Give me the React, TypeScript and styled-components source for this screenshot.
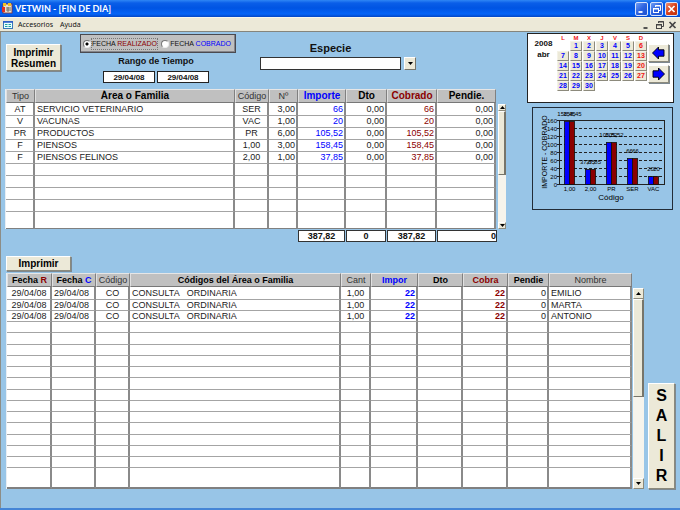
import React from 'react';
import styled, { createGlobalStyle } from 'styled-components';

const BLUE = '#0000ff';
const RED = '#8b0000';
const CREAM = '#ece9d8';

const GlobalStyle = createGlobalStyle`
  * { box-sizing: border-box; }
  body { margin: 0; background: #98c5e7; }
  button, input, select { font-family: inherit; margin: 0; padding: 0; }
`;

const Window = styled.div`
  display: flex;
  flex-direction: column;
  min-height: 100vh;
  font-family: 'Liberation Sans', Arial, sans-serif;
  font-size: 9px;
  color: #111;
  background: linear-gradient(90deg, #8d8d86 0 1px, #98c5e7 1px);
  border-bottom: 2px solid #4585d6;
`;

const TitleBar = styled.header`
  display: flex;
  align-items: center;
  gap: 2px;
  height: 17px;
  padding: 0 2px;
  background: linear-gradient(#2f86f5 0, #0a5ee8 3px, #0054e3 8px, #0464f8 14px, #0346c4 17px);
`;

const Title = styled.h1`
  flex: 1;
  margin: 0;
  font: bold 9px/16px Lato, sans-serif;
  color: #fff;
`;

const Controls = styled.div`
  display: flex;
  gap: 2px;
`;

const CaptionButton = styled.button<{ $close?: boolean }>`
  display: flex;
  width: 13px;
  height: 14px;
  border: 1px solid #d5e2fb;
  border-radius: 2px;
  background: ${p => (p.$close ? 'linear-gradient(135deg, #f09070, #d8401c 50%, #c03008)' : 'linear-gradient(135deg, #6f9cf5, #2c62e0 50%, #1c50d0)')};
`;

const MenuBar = styled.nav`
  display: flex;
  align-items: center;
  height: 15px;
  padding: 0 2px 0 3px;
  background: ${CREAM};
  border-top: 1px solid #f8f6ec;
  border-bottom: 1px solid #85857c;
  font: 7px/13px 'Noto Sans', sans-serif;
`;

const MenuItem = styled.button`
  margin-right: 7px;
  border: 0;
  background: none;
  font: inherit;
  color: #111;
`;

const MenuIcon = styled.svg`
  margin-right: 5px;
`;

const DocControls = styled(Controls)`
  margin-left: auto;
`;

const DocButton = styled.button`
  display: flex;
  width: 11px;
  height: 12px;
  border: 0;
  background: none;
`;

const Upper = styled.main`
  display: grid;
  grid-template-columns: minmax(0, 1fr) 147px;
  gap: 21px;
  padding: 1px 6px 0 5px;
`;

const Filters = styled.div`
  display: flex;
  height: 56px;
  padding-left: 1px;
`;

const PushButton = styled.button`
  border: 1px solid;
  border-color: #fff #8c8a7c #8c8a7c #fff;
  background: ${CREAM};
  box-shadow: 1px 1px 0 #7d8890;
  color: #000;
  font-size: 10px;
  font-weight: bold;
  line-height: 11px;
`;

const SummaryButton = styled(PushButton)`
  width: 55px;
  height: 27px;
  margin-top: 11px;
`;

const DateFilter = styled.div`
  display: flex;
  flex-direction: column;
  align-items: center;
  width: 156px;
  margin: 1px 24px 0 19px;
`;

const RadioBox = styled.div`
  display: flex;
  align-items: center;
  justify-content: space-between;
  width: 156px;
  height: 19px;
  padding: 0 4px 0 2px;
  border: 1px solid #4a4a50;
  box-shadow: inset -1px -1px 0 #85858a;
  background: #c0c0c0;
  font-size: 7px;
`;

const RadioLabel = styled.label`
  display: flex;
  align-items: center;
  gap: 1px;
`;

const RadioText = styled.span<{ $focus?: boolean }>`
  line-height: 10px;
  outline: ${p => (p.$focus ? '1px dotted #777' : 'none')};
`;

const Radio = styled.input`
  appearance: none;
  width: 8px;
  height: 8px;
  border: 1px solid;
  border-color: #777 #eee #eee #777;
  border-radius: 50%;
  background: #fff;
  &:checked { background: radial-gradient(#000 0 1px, #fff 2px); }
`;

const Tint = styled.span<{ $color: string }>`
  color: ${p => p.$color};
`;

const RangeLabel = styled.div`
  margin: 2px 0 4px;
  padding-right: 4px;
  font-size: 9px;
  font-weight: bold;
  line-height: 12px;
`;

const Range = styled.div`
  display: flex;
  gap: 2px;
  padding-right: 4px;
`;

const DateInput = styled.input`
  width: 52px;
  height: 12px;
  border: 1px solid #222;
  background: #fff;
  font-size: 8px;
  font-weight: bold;
  text-align: center;
  color: #111;
`;

const Species = styled.div`
  display: grid;
  grid-template-columns: 141px 12px;
  grid-template-rows: 14px 13px;
  column-gap: 3px;
  row-gap: 2px;
  margin-top: 8px;
  align-content: start;
`;

const SpeciesLabel = styled.label`
  font-size: 11px;
  font-weight: bold;
  line-height: 14px;
  text-align: center;
`;

const SpeciesField = styled.span`
  grid-area: 2 / 1;
  border: 1px solid #333;
  background: #fff;
`;

const SpeciesArrow = styled.span`
  grid-area: 2 / 2;
  display: flex;
  align-items: center;
  justify-content: center;
  border: 1px solid;
  border-color: #fff #77756a #77756a #fff;
  background: ${CREAM};
`;

const SpeciesSelect = styled.select`
  grid-area: 2 / 1 / 3 / 3;
  z-index: 1;
  appearance: none;
  border: 0;
  background: none;
  padding: 0 16px 0 4px;
  font-size: 9px;
`;

const GridRow = styled.div`
  display: flex;
`;

const Table = styled.table`
  flex: 1;
  width: 0;
  table-layout: fixed;
  border-collapse: separate;
  border-spacing: 0;
  border-left: 1px solid #e8eef4;
`;

const HeadCell = styled.th<{ $plain?: boolean; $color?: string }>`
  height: 14px;
  padding: 0;
  overflow: hidden;
  border: 1px solid;
  border-color: #e6e6e6 #808080 #777 #e0e0e0;
  background: #c0c0c0;
  color: ${p => p.$color || (p.$plain ? '#333' : '#000')};
  font-size: ${p => (p.$plain ? '9px' : '10px')};
  font-weight: ${p => (p.$plain ? 'normal' : 'bold')};
  line-height: 12px;
  white-space: nowrap;
`;

const LowerHeadCell = styled(HeadCell)`
  font-size: 9px;
`;

type Align = 'left' | 'center' | 'right';

const Cell = styled.td<{ $align?: Align; $color?: string; $bold?: boolean }>`
  height: 12px;
  padding: 0 1px 0 2px;
  overflow: hidden;
  border-right: 2px solid #8a8a8a;
  border-bottom: 1px solid #a4a4a4;
  background: #fff;
  color: ${p => p.$color || '#222'};
  font-weight: ${p => (p.$bold ? 'bold' : 'normal')};
  line-height: 11px;
  text-align: ${p => p.$align || 'left'};
  white-space: pre;
`;

const UpperBody = styled.tbody`
  tr:first-child td { height: 13px; padding-top: 1px; }
  tr:last-child td { height: 17px; border-bottom-color: #808080; }
`;

const LowerBody = styled.tbody`
  td { height: 11px; line-height: 10px; }
  tr:nth-child(4n + 1) td { height: 12px; line-height: 11px; }
  tr:first-child td { height: 13px; padding-top: 1px; }
  tr:last-child td { height: 21px; border-bottom: 2px solid #808080; }
`;

const ScrollBar = styled.div<{ $wide?: boolean }>`
  display: flex;
  flex-direction: column;
  width: ${p => (p.$wide ? '11px' : '8px')};
  margin: 15px 0 0 ${p => (p.$wide ? '1px' : '2px')};
  background: #f6f4ec;
`;

const ScrollArrow = styled.button<{ $tall?: boolean }>`
  display: flex;
  align-items: center;
  justify-content: center;
  height: ${p => (p.$tall ? '11px' : '7px')};
  border: 1px solid;
  border-color: #fff #8c8a7c #8c8a7c #fff;
  background: ${CREAM};
`;

const Thumb = styled.div<{ $size: string }>`
  flex: 0 0 ${p => p.$size};
  margin-bottom: auto;
  border: 1px solid;
  border-color: #fff #77756a #77756a #fff;
  border-right-width: 2px;
  background: ${CREAM};
`;

const Totals = styled.div`
  display: grid;
  grid-template-columns: 47px 40px 49px 60px;
  gap: 1px;
  justify-content: end;
  margin: 1px 9px 0 0;
`;

const Total = styled.output<{ $end?: boolean }>`
  height: 12px;
  border: 1px solid #333;
  background: #fff;
  font-size: 9px;
  font-weight: bold;
  line-height: 10px;
  text-align: ${p => (p.$end ? 'right' : 'center')};
`;

const Side = styled.aside`
  display: flex;
  flex-direction: column;
  gap: 4px;
`;

const Calendar = styled.section`
  display: flex;
  height: 70px;
  border: 1px solid #222;
  background: #fff;
`;

const Month = styled.div`
  width: 29px;
  padding: 4px 0 0 2px;
  font-size: 8px;
  font-weight: bold;
  line-height: 11px;
  text-align: center;
`;

const Days = styled.div`
  display: grid;
  grid-template-columns: repeat(7, 12px);
  grid-template-rows: 7px;
  grid-auto-rows: 10px;
  column-gap: 1px;
  align-content: start;
`;

const WeekDay = styled.span`
  color: #f01818;
  font-size: 6px;
  font-weight: bold;
  line-height: 8px;
  text-align: center;
`;

const Day = styled.button<{ $sunday?: boolean; $first?: boolean }>`
  grid-column-start: ${p => (p.$first ? 2 : 'auto')};
  border: 1px solid;
  border-color: #f4f2e6 #8c8a7c #8c8a7c #f4f2e6;
  background: ${CREAM};
  color: ${p => (p.$sunday ? '#f01010' : BLUE)};
  font-size: 7px;
  font-weight: bold;
  line-height: 8px;
`;

const Pager = styled.div`
  display: flex;
  flex-direction: column;
  gap: 3px;
  margin: 10px 0 0 1px;
`;

const PagerButton = styled(PushButton)`
  display: flex;
  align-items: center;
  justify-content: center;
  width: 21px;
  height: 18px;
`;

const Chart = styled.svg`
  display: block;
  margin-left: 5px;
  font-family: 'Liberation Sans', Arial, sans-serif;
`;

const Lower = styled.section`
  padding: 14px 5px 0 6px;
`;

const PrintButton = styled(PushButton)`
  display: block;
  width: 65px;
  height: 15px;
  margin-bottom: 2px;
`;

const ExitButton = styled(PushButton)`
  align-self: flex-end;
  display: flex;
  flex-direction: column;
  align-items: center;
  justify-content: center;
  width: 27px;
  height: 106px;
  margin-left: 4px;
  font-size: 16px;
  line-height: 20px;
`;

const Arrow = ({ down }: { down?: boolean }) => (
  <svg width="5" height="3" viewBox="0 0 5 3" aria-hidden="true">
    <path d={down ? 'M0 0H5L2.5 3Z' : 'M0 3H5L2.5 0Z'} fill="#000" />
  </svg>
);

const MonthArrow = ({ back }: { back?: boolean }) => (
  <svg width="15" height="14" viewBox="0 0 15 14" aria-hidden="true">
    <path
      d={back ? 'M1.5 7L7.5 1V3.8H13V10.2H7.5V13Z' : 'M13.5 7L7.5 1V3.8H2V10.2H7.5V13Z'}
      fill="#0000ff"
      stroke="#000"
      strokeWidth="0.9"
    />
  </svg>
);

const Glyph = ({ kind, color }: { kind: 'min' | 'restore' | 'close'; color: string }) => (
  <svg width="11" height="12" viewBox="0 0 11 12" fill="none" stroke={color} aria-hidden="true">
    {kind === 'min' && <path d="M2.5 9H6.5" strokeWidth="1.8" />}
    {kind === 'restore' && (
      <g strokeWidth="1">
        <path d="M4.5 4V2.5H9.5V7.5H8" />
        <path d="M4 3H10" />
        <rect x="2.5" y="5.5" width="5" height="4" />
        <path d="M2 6H8" />
      </g>
    )}
    {kind === 'close' && <path d="M2.5 3L8.5 9M8.5 3L2.5 9" strokeWidth="1.7" />}
  </svg>
);

const kinds = ['min', 'restore', 'close'] as const;
const kindNames = { min: 'Minimizar', restore: 'Restaurar', close: 'Cerrar' };

const areas = [
  ['AT', 'SERVICIO VETERINARIO', 'SER', '3,00', '66', '0,00', '66', '0,00'],
  ['V', 'VACUNAS', 'VAC', '1,00', '20', '0,00', '20', '0,00'],
  ['PR', 'PRODUCTOS', 'PR', '6,00', '105,52', '0,00', '105,52', '0,00'],
  ['F', 'PIENSOS', '1,00', '3,00', '158,45', '0,00', '158,45', '0,00'],
  ['F', 'PIENSOS FELINOS', '2,00', '1,00', '37,85', '0,00', '37,85', '0,00'],
];

const areaAlign: Align[] = ['center', 'left', 'center', 'right', 'right', 'right', 'right', 'right'];
const areaColor: Record<number, string> = { 4: BLUE, 6: RED };

const visit = (name: string) => ['29/04/08', '29/04/08', 'CO', 'CONSULTA   ORDINARIA', '1,00', '22', '', '22', '0', name];
const visits = ['EMILIO', 'MARTA', 'ANTONIO'].map(visit);
const visitAlign: Align[] = ['center', 'left', 'center', 'left', 'center', 'right', 'right', 'right', 'right', 'left'];
const visitColor: Record<number, string> = { 5: BLUE, 7: RED };

const pad = (rows: string[][], count: number, columns: number) => [
  ...rows,
  ...Array.from({ length: count - rows.length }, () => Array(columns).fill('')),
];

const bars = [
  { code: '1,00', value: 158.45, label: '158,45' },
  { code: '2,00', value: 37.85, label: '37,85' },
  { code: 'PR', value: 105.52, label: '105,52' },
  { code: 'SER', value: 66, label: '66' },
  { code: 'VAC', value: 20, label: '20' },
];

const ticks = [0, 20, 40, 60, 80, 100, 120, 140, 160];

const AmountChart = () => (
  <Chart width="141" height="103" viewBox="0 0 141 103" role="img" aria-label="Importe y cobrado por código">
    <rect x="0.5" y="0.5" width="140" height="102" fill="none" stroke="#222c38" />
    {ticks.map(t => (
      <g key={t}>
        <path d={`M27 ${77.5 - t * 0.4}H132`} stroke="#222" strokeDasharray={t % 160 ? '3 2' : undefined} />
        <path d={`M25 ${77.5 - t * 0.4}H28`} stroke="#222" />
        <text x="25" y={79.5 - t * 0.4} fontSize="6" textAnchor="end">{t}</text>
      </g>
    ))}
    <path d="M27.5 13V78M132.5 13V78" stroke="#222" />
    {bars.map((b, i) => {
      const x = 32.5 + i * 21;
      const h = Math.round(b.value * 0.4);
      return (
        <g key={b.code}>
          <rect x={x} y={77.5 - h} width="5" height={h} fill="#0000ff" stroke="#111" strokeWidth="0.8" />
          <rect x={x + 5} y={77.5 - h} width="5" height={h} fill="#8b0000" stroke="#111" strokeWidth="0.8" />
          <text x={x + 2} y={72 - h} fontSize="6" textAnchor="middle">{b.label}</text>
          <text x={x + 8} y={72 - h} fontSize="6" textAnchor="middle">{b.label}</text>
          <text x={x + 5} y="84" fontSize="6" textAnchor="middle">{b.code}</text>
        </g>
      );
    })}
    <text x="79" y="93" fontSize="8" textAnchor="middle">Código</text>
    <text transform="translate(15 45) rotate(-90)" fontSize="7" textAnchor="middle">IMPORTE - COBRADO</text>
  </Chart>
);

export default function App() {
  return (
    <Window>
      <GlobalStyle />
      <TitleBar>
        <svg width="11" height="13" viewBox="0 0 11 13" aria-hidden="true">
          <rect x="1" y="2" width="9" height="9" fill="#e8e0d0" stroke="#8a3028" strokeWidth="0.8" />
          <path d="M1 1H4V4H1ZM6 1H9V4H6Z" fill="#f2c020" />
          <path d="M0 5H3V10H0Z" fill="#e03020" />
          <path d="M4 6H9M4 8H9M6 5V10" stroke="#555" strokeWidth="0.8" />
        </svg>
        <Title>VETWIN - [FIN DE DIA]</Title>
        <Controls>
          {kinds.map(k => (
            <CaptionButton key={k} $close={k === 'close'} aria-label={kindNames[k]}>
              <Glyph kind={k} color="#fff" />
            </CaptionButton>
          ))}
        </Controls>
      </TitleBar>
      <MenuBar>
        <MenuIcon width="10" height="8" viewBox="0 0 10 8" aria-hidden="true">
          <rect x="0.5" y="0.5" width="9" height="7" fill="#e8ffff" stroke="#3878b8" />
          <path d="M0 1H10" stroke="#2858c8" strokeWidth="1.5" />
          <path d="M2 3.5H4.5M2 5.5H4.5M5.5 3.5H8M5.5 5.5H8" stroke="#20a0a0" />
        </MenuIcon>
        <MenuItem>Accesorios</MenuItem>
        <MenuItem>Ayuda</MenuItem>
        <DocControls>
          {kinds.map(k => (
            <DocButton key={k} aria-label={`${kindNames[k]} documento`}>
              <Glyph kind={k} color="#444" />
            </DocButton>
          ))}
        </DocControls>
      </MenuBar>

      <Upper>
        <div>
          <Filters>
            <SummaryButton>Imprimir Resumen</SummaryButton>
            <DateFilter>
              <RadioBox role="radiogroup" aria-label="Tipo de fecha">
                <RadioLabel>
                  <Radio type="radio" name="fecha" defaultChecked />
                  <RadioText $focus>FECHA <Tint $color={RED}>REALIZADO</Tint></RadioText>
                </RadioLabel>
                <RadioLabel>
                  <Radio type="radio" name="fecha" />
                  <RadioText>FECHA <Tint $color={BLUE}>COBRADO</Tint></RadioText>
                </RadioLabel>
              </RadioBox>
              <RangeLabel>Rango de Tiempo</RangeLabel>
              <Range>
                <DateInput aria-label="Desde" defaultValue="29/04/08" />
                <DateInput aria-label="Hasta" defaultValue="29/04/08" />
              </Range>
            </DateFilter>
            <Species>
              <SpeciesLabel htmlFor="especie">Especie</SpeciesLabel>
              <SpeciesField aria-hidden="true" />
              <SpeciesArrow aria-hidden="true"><Arrow down /></SpeciesArrow>
              <SpeciesSelect id="especie"><option value="" /></SpeciesSelect>
            </Species>
          </Filters>
          <GridRow>
            <Table>
              <colgroup>
                <col width="29" /><col /><col width="34" /><col width="29" />
                <col width="48" /><col width="41" /><col width="50" /><col width="59" />
              </colgroup>
              <thead>
                <tr>
                  <HeadCell $plain>Tipo</HeadCell>
                  <HeadCell>Área o Familia</HeadCell>
                  <HeadCell $plain>Código</HeadCell>
                  <HeadCell $plain>Nº</HeadCell>
                  <HeadCell $color={BLUE}>Importe</HeadCell>
                  <HeadCell>Dto</HeadCell>
                  <HeadCell $color={RED}>Cobrado</HeadCell>
                  <HeadCell>Pendie.</HeadCell>
                </tr>
              </thead>
              <UpperBody>
                {pad(areas, 10, 8).map((row, r) => (
                  <tr key={r}>
                    {row.map((text, c) => (
                      <Cell key={c} $align={areaAlign[c]} $color={areaColor[c]}>{text}</Cell>
                    ))}
                  </tr>
                ))}
              </UpperBody>
            </Table>
            <ScrollBar>
              <ScrollArrow aria-label="Subir"><Arrow /></ScrollArrow>
              <Thumb $size="64px" />
              <ScrollArrow aria-label="Bajar"><Arrow down /></ScrollArrow>
            </ScrollBar>
          </GridRow>
          <Totals>
            <Total>387,82</Total>
            <Total>0</Total>
            <Total>387,82</Total>
            <Total $end>0</Total>
          </Totals>
        </div>
        <Side>
          <Calendar>
            <Month>2008<br />abr</Month>
            <Days>
              {['L', 'M', 'X', 'J', 'V', 'S', 'D'].map(d => <WeekDay key={d}>{d}</WeekDay>)}
              {Array.from({ length: 30 }, (_, i) => i + 1).map(d => (
                <Day key={d} $first={d === 1} $sunday={d % 7 === 6}>{d}</Day>
              ))}
            </Days>
            <Pager>
              <PagerButton aria-label="Mes anterior"><MonthArrow back /></PagerButton>
              <PagerButton aria-label="Mes siguiente"><MonthArrow /></PagerButton>
            </Pager>
          </Calendar>
          <AmountChart />
        </Side>
      </Upper>

      <Lower>
        <PrintButton>Imprimir</PrintButton>
        <GridRow>
          <Table>
            <colgroup>
              <col width="45" /><col width="44" /><col width="34" /><col /><col width="30" />
              <col width="47" /><col width="45" /><col width="45" /><col width="41" /><col width="83" />
            </colgroup>
            <thead>
              <tr>
                <LowerHeadCell>Fecha <Tint $color={RED}>R</Tint></LowerHeadCell>
                <LowerHeadCell>Fecha <Tint $color={BLUE}>C</Tint></LowerHeadCell>
                <LowerHeadCell $plain>Código</LowerHeadCell>
                <LowerHeadCell>Códigos del Área o Familia</LowerHeadCell>
                <LowerHeadCell $plain>Cant</LowerHeadCell>
                <LowerHeadCell $color={BLUE}>Impor</LowerHeadCell>
                <LowerHeadCell>Dto</LowerHeadCell>
                <LowerHeadCell $color={RED}>Cobra</LowerHeadCell>
                <LowerHeadCell>Pendie</LowerHeadCell>
                <LowerHeadCell $plain>Nombre</LowerHeadCell>
              </tr>
            </thead>
            <LowerBody>
              {pad(visits, 17, 10).map((row, r) => (
                <tr key={r}>
                  {row.map((text, c) => (
                    <Cell key={c} $align={visitAlign[c]} $color={visitColor[c]} $bold={c === 5 || c === 7}>{text}</Cell>
                  ))}
                </tr>
              ))}
            </LowerBody>
          </Table>
          <ScrollBar $wide>
            <ScrollArrow $tall aria-label="Subir lista"><Arrow /></ScrollArrow>
            <Thumb $size="98px" />
            <ScrollArrow $tall aria-label="Bajar lista"><Arrow down /></ScrollArrow>
          </ScrollBar>
          <ExitButton aria-label="SALIR">
            {'SALIR'.split('').map(letter => <span key={letter}>{letter}</span>)}
          </ExitButton>
        </GridRow>
      </Lower>
    </Window>
  );
}
